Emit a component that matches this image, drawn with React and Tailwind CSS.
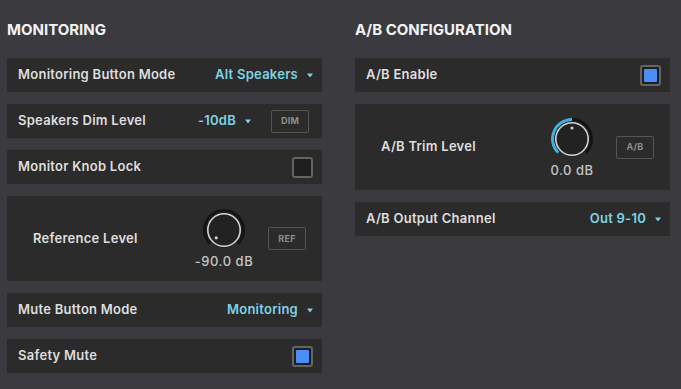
import React from 'react';

const FONT = { fontFamily: 'Inter, "Noto Sans", sans-serif' };

// 旋钮：angle 以正上方为 0，顺时针为正，范围 -135 ~ 135
function Knob({ angle = -135, fill = false }) {
  const c = 22;
  const r = 19.5;
  const pt = (deg, rad) => {
    const a = (deg * Math.PI) / 180;
    return [c + rad * Math.sin(a), c - rad * Math.cos(a)];
  };
  const [sx, sy] = pt(-135, r);
  const [ex, ey] = pt(135, r);
  const [vx, vy] = pt(angle, r);
  const [dx, dy] = pt(angle, 11);
  const large = angle + 135 > 180 ? 1 : 0;
  return (
    <svg width="44" height="44" viewBox="0 0 44 44">
      <path d={`M ${sx} ${sy} A ${r} ${r} 0 1 1 ${ex} ${ey}`} fill="none" stroke="#141414" strokeWidth="3" />
      {fill && (
        <path d={`M ${sx} ${sy} A ${r} ${r} 0 ${large} 1 ${vx} ${vy}`} fill="none" stroke="#3fb3df" strokeWidth="3" />
      )}
      <circle cx={c} cy={c} r="17.5" fill="#151515" />
      <circle cx={c} cy={c} r="16.2" fill="#222222" stroke="#d4d4d4" strokeWidth="1.6" />
      <circle cx={dx} cy={dy} r="1.6" fill="#d0d0d0" />
    </svg>
  );
}

function Caret() {
  return (
    <svg width="6" height="5" viewBox="0 0 6 5" className="flex-shrink-0">
      <path d="M0 0.5 H6 L3 4.5 Z" fill="#7fd3e3" />
    </svg>
  );
}

function Row({ label, children }) {
  return (
    <div className="h-[34px] bg-[#2b2b2b] flex items-center justify-between pl-[11px] pr-[9px]">
      <span className="text-[13px] font-semibold tracking-[0.02em] text-[#dedede]">{label}</span>
      <div className="flex items-center">{children}</div>
    </div>
  );
}

function Select({ value }) {
  return (
    <div className="flex items-center gap-[9px]">
      <span className="text-[13px] font-semibold tracking-[0.02em] text-[#7fd3e3]">{value}</span>
      <Caret />
    </div>
  );
}

function Check({ on }) {
  return (
    <div className="w-[21px] h-[21px] rounded-[3px] border-2 border-[#646464] bg-[#1f1f1f] p-[2px]">
      {on && <div className="w-full h-full rounded-[1px] bg-[#4a8ff8]" />}
    </div>
  );
}

function TagButton({ children }) {
  return (
    <div className="w-[38px] h-[23px] rounded-[2px] border-[1.5px] border-[#555555] flex items-center justify-center text-[9px] font-bold text-[#8e8e8e] tracking-[0.03em]">
      {children}
    </div>
  );
}

function KnobRow({ label, value, angle, fill, button, height }) {
  return (
    <div className={`${height} bg-[#2b2b2b] flex items-center pl-[26px] pr-4`}>
      <span className="flex-1 text-[13px] font-semibold tracking-[0.02em] text-[#dedede]">{label}</span>
      <div className="w-[64px] flex flex-col items-center">
        <Knob angle={angle} fill={fill} />
        <span className="mt-[1px] text-[13px] leading-4 font-medium tracking-[0.04em] text-[#c4c4c4] whitespace-nowrap">{value}</span>
      </div>
      <div className="ml-3">
        <TagButton>{button}</TagButton>
      </div>
    </div>
  );
}

export default function App() {
  return (
    <div className="w-[681px] h-[389px] bg-[#3a3a3f] pl-[7px] pt-[20px] overflow-hidden" style={FONT}>
      <div className="grid grid-cols-[315px_315px] gap-x-[33px]">
        {/* Monitoring */}
        <div>
          <h2 className="text-[15px] leading-5 font-bold text-[#f2f2f2] mb-[18px]">MONITORING</h2>
          <div className="flex flex-col gap-3">
            <Row label="Monitoring Button Mode">
              <Select value="Alt Speakers" />
            </Row>
            <Row label="Speakers Dim Level">
              <Select value="-10dB" />
              <div className="ml-5 mr-1">
                <TagButton>DIM</TagButton>
              </div>
            </Row>
            <Row label="Monitor Knob Lock">
              <Check />
            </Row>
            <KnobRow label="Reference Level" value="-90.0 dB" angle={-135} button="REF" height="h-[85px]" />
            <Row label="Mute Button Mode">
              <Select value="Monitoring" />
            </Row>
            <Row label="Safety Mute">
              <Check on />
            </Row>
          </div>
        </div>

        {/* A/B */}
        <div>
          <h2 className="text-[15px] leading-5 font-bold text-[#f2f2f2] mb-[18px]">A/B CONFIGURATION</h2>
          <div className="flex flex-col gap-3">
            <Row label="A/B Enable">
              <Check on />
            </Row>
            <KnobRow label="A/B Trim Level" value="0.0 dB" angle={0} fill button="A/B" height="h-[86px]" />
            <Row label="A/B Output Channel">
              <Select value="Out 9-10" />
            </Row>
          </div>
        </div>
      </div>
    </div>
  );
}
